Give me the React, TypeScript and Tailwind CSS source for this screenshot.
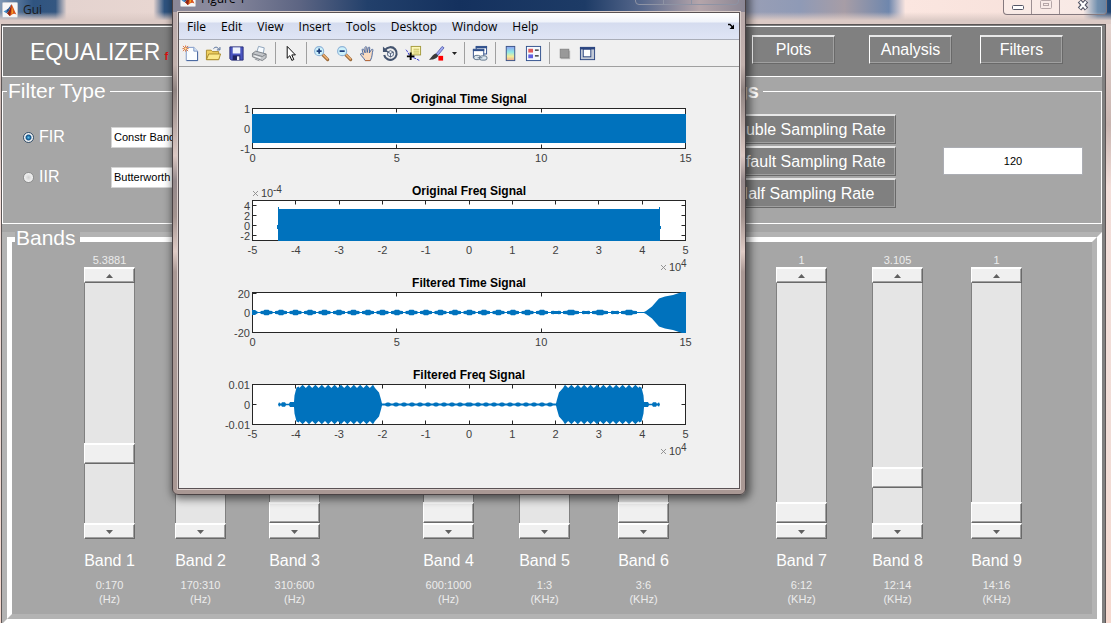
import { useState } from "react";
import type { ReactNode } from "react";

const BLUE = "#0072bd";

function MatlabLogo() {
  return (
    <svg width="16" height="16" viewBox="0 0 16 16" aria-hidden="true" className="shrink-0">
      <rect x="0.5" y="0.5" width="15" height="15" rx="1" fill="#f7f7f7" stroke="#c3c7cf" />
      <path d="M1.5 9.5 L5 7.5 L7 9 L4.5 11.2 Z" fill="#4a90c8" />
      <path d="M5 7.5 C7 6.5 8 3.5 9.5 2.2 L7 9 L4.5 11.2 Z" fill="#24508a" />
      <path d="M9.5 2.2 C8.5 5 8 8 5 11.5 C6.5 11.8 7 13.5 8 14 C10 13 11 10.5 14.5 12.5 C12.5 9 11 4 9.5 2.2 Z" fill="#d9541e" />
      <path d="M9.5 2.2 C9.3 6 9 10 8 14 C6.8 13.4 6.5 11.8 5 11.5 C8 8.5 8.5 5 9.5 2.2 Z" fill="#8e2412" />
      <path d="M10 5 C10.6 7 11 9.5 11 11 L9.5 12.2 Z" fill="#f5a623" />
    </svg>
  );
}

/* ---------- Equalizer window ---------- */

function BevelButton({ children, className }: { children: ReactNode; className: string }) {
  return (
    <button
      type="button"
      className={`border border-t-2 border-l-white border-t-[#e8e8e8] border-r-[#696969] border-b-[#696969] bg-[#808080] text-center text-base leading-5 text-white shadow-[inset_-1px_-1px_0_#a0a0a0] ${className}`}
    >
      {children}
    </button>
  );
}

type Band = { name: string; value: string; range: string; unit: string; pos: number };

const BAND_GROUPS: { cols: string; bands: Band[] }[] = [
  {
    cols: "grid-cols-[91px_94px_51px]",
    bands: [
      { name: "Band 1", value: "5.3881", range: "0:170", unit: "(Hz)", pos: 27 },
      { name: "Band 2", value: "", range: "170:310", unit: "(Hz)", pos: 50 },
      { name: "Band 3", value: "", range: "310:600", unit: "(Hz)", pos: 0 },
    ],
  },
  {
    cols: "grid-cols-[96px_99px_55px]",
    bands: [
      { name: "Band 4", value: "", range: "600:1000", unit: "(Hz)", pos: 0 },
      { name: "Band 5", value: "", range: "1:3", unit: "(KHz)", pos: 50 },
      { name: "Band 6", value: "", range: "3:6", unit: "(KHz)", pos: 0 },
    ],
  },
  {
    cols: "grid-cols-[96px_99px_51px]",
    bands: [
      { name: "Band 7", value: "1", range: "6:12", unit: "(KHz)", pos: 0 },
      { name: "Band 8", value: "3.105", range: "12:14", unit: "(KHz)", pos: 16 },
      { name: "Band 9", value: "1", range: "14:16", unit: "(KHz)", pos: 0 },
    ],
  },
];

function StepButton({ label, down, onClick }: { label: string; down?: boolean; onClick: () => void }) {
  return (
    <button
      type="button"
      aria-label={label}
      onClick={onClick}
      className="flex h-4 w-full items-center justify-center border border-t-2 border-l-white border-t-white border-r-[#696969] border-b-[#696969] bg-[#f0f0f0] shadow-[inset_-1px_-1px_0_#a0a0a0]"
    >
      <svg width="7" height="4" viewBox="0 0 7 4" aria-hidden="true">
        <path d={down ? "M0 0H7L3.5 4Z" : "M0 4H7L3.5 0Z"} fill="#606060" />
      </svg>
    </button>
  );
}

function BandSlider({ band }: { band: Band }) {
  const [pos, setPos] = useState(band.pos);
  const id = band.name.toLowerCase().replace(" ", "-");
  return (
    <div className="flex w-[51px] flex-col items-center text-[11px] whitespace-nowrap text-[#ececec]">
      <output htmlFor={id} className="h-[13px] leading-[13px]">{band.value}</output>
      <div className="flex w-full flex-col">
        <StepButton label={`Raise ${band.name}`} onClick={() => setPos(Math.min(100, pos + 1))} />
        <input
          id={id}
          type="range"
          min={0}
          max={100}
          value={pos}
          onChange={(e) => setPos(Number(e.target.value))}
          className="m-0 block h-60 w-full appearance-none bg-[#e5e5e5] shadow-[inset_1px_0_0_#808080,inset_-1px_0_0_#808080] [direction:rtl] [writing-mode:vertical-lr] [&::-webkit-slider-thumb]:box-border [&::-webkit-slider-thumb]:h-[21px] [&::-webkit-slider-thumb]:w-[51px] [&::-webkit-slider-thumb]:appearance-none [&::-webkit-slider-thumb]:border [&::-webkit-slider-thumb]:border-t-2 [&::-webkit-slider-thumb]:border-t-white [&::-webkit-slider-thumb]:border-r-[#696969] [&::-webkit-slider-thumb]:border-b-[#696969] [&::-webkit-slider-thumb]:border-l-white [&::-webkit-slider-thumb]:bg-[#f0f0f0] [&::-webkit-slider-thumb]:shadow-[inset_-1px_-1px_0_#a0a0a0]"
        />
        <StepButton down label={`Lower ${band.name}`} onClick={() => setPos(Math.max(0, pos - 1))} />
      </div>
      <label htmlFor={id} className="mt-3 text-base leading-5 text-white">{band.name}</label>
      <div className="mt-[7px] text-center leading-[14px]">
        <div>{band.range}</div>
        <div>{band.unit}</div>
      </div>
    </div>
  );
}

function FilterRow({ id, name, option, checked, onPick }: { id: string; name: string; option: string; checked: boolean; onPick: () => void }) {
  return (
    <div className="flex h-10 items-center pl-5">
      <div className="flex w-[88px] items-center gap-[5px]">
        <input
          id={id}
          type="radio"
          name="filter"
          checked={checked}
          onChange={onPick}
          className="size-[11px] appearance-none rounded-full border border-[#8e8f8f] bg-[radial-gradient(circle_at_center,#d2d2d2_0,#f4f4f4_70%)] checked:border-[#35506b] checked:bg-[radial-gradient(circle_at_center,#5cc3f0_0,#0e4f86_38%,#f4f4f4_55%)]"
        />
        <label htmlFor={id} className="text-base leading-5 text-white">{name}</label>
      </div>
      <select aria-label={`${name} method`} className="h-[21px] w-40 appearance-none border border-[#d4d4d4] bg-white px-[2px] text-[11px] leading-4 text-black">
        <option>{option}</option>
      </select>
    </div>
  );
}

function EqualizerWindow() {
  const [filter, setFilter] = useState("fir");
  return (
    <main className="flex min-h-screen flex-col bg-[linear-gradient(#eadad5,#c9b5b0_20%,#f3ded9_30%,#f0dcd6_70%,#f6d9cf)] pr-[5px] pl-px">
      <header className="-mr-[5px] -ml-px flex h-6 items-start justify-between bg-[linear-gradient(to_bottom,transparent_50%,#dccac5_85%),linear-gradient(to_right,#7f97b4_0,#2f5480_3%,#345781_5%,#e4d3cf_6%,#e8d6d1_13.8%,#2f5480_14.8%,#2f5480_66%,#9a9fb5_67%,#8f9ab6_72%,#a79da6_76%,#6f87ad_80%,#fbe6e0_81.5%,#f6e0da_97.5%,#34608c_98.8%,#1c4170_100%)]">
        <div className="flex items-center gap-[5px] pt-[2px] pl-[2px]">
          <MatlabLogo />
          <h1 className="font-['Open_Sans',sans-serif] text-xs leading-4 text-[#1b1b1b]">Gui</h1>
        </div>
        <div className="mr-[4px] flex h-[15px] divide-x divide-[#9c8f92] overflow-hidden rounded-b border border-t-0 border-[#85797e] bg-white/30">
          <button type="button" aria-label="Minimize" className="flex w-7 justify-center pt-[5px]">
            <svg width="12" height="5" viewBox="0 0 12 5" aria-hidden="true"><rect x="0.5" y="0.5" width="11" height="4" rx="1" fill="#fff" stroke="#535666" /></svg>
          </button>
          <button type="button" aria-label="Maximize" disabled className="flex w-7 justify-center">
            <svg width="12" height="10" viewBox="0 0 12 10" aria-hidden="true" fill="none" stroke="#b5a7a8"><rect x="0.5" y="0.5" width="11" height="8" rx="1" fill="#f8ebe8" /><rect x="3.5" y="3.5" width="5" height="2" /></svg>
          </button>
          <button type="button" aria-label="Close" className="flex w-[46px] justify-center">
            <svg width="12" height="11" viewBox="0 0 12 11" aria-hidden="true"><path d="M2.5 1 L9.5 9 M9.5 1 L2.5 9" stroke="#535666" strokeWidth="4.6" /><path d="M3 1.5 L9 8.5 M9 1.5 L3 8.5" stroke="#fff" strokeWidth="2.2" /></svg>
          </button>
        </div>
      </header>

      <div className="flex flex-1 flex-col border-t border-r border-l border-[#5c5656] bg-[#808080] pr-[3px] pt-px">
        <section className="flex h-[51px] shrink-0 items-start justify-between border border-white bg-[#808080] pr-[38px] pl-[27px]">
          <div className="flex items-baseline gap-1 pt-[9px]">
            <h2 className="text-[23px] leading-8 text-white">EQUALIZER</h2>
            <span className="text-[11px] font-bold text-[#e01010]">f</span>
          </div>
          <nav className="grid grid-cols-[117px_111px_83px] pt-2">
            <BevelButton className="h-[29px] w-[83px]">Plots</BevelButton>
            <BevelButton className="h-[29px] w-[83px]">Analysis</BevelButton>
            <BevelButton className="h-[29px] w-[83px]">Filters</BevelButton>
          </nav>
        </section>

        <div className="flex flex-1 flex-col bg-[#a6a6a6]">
          <div className="flex pt-[2px]">
            <fieldset className="min-w-0 flex-1 border border-white pt-[14px] pb-[26px]">
              <legend className="ml-[4px] pr-1 pl-px text-[21px] leading-6 text-white">Filter Type</legend>
              <FilterRow id="fir" name="FIR" option="Constr Band" checked={filter === "fir"} onPick={() => setFilter("fir")} />
              <FilterRow id="iir" name="IIR" option="Butterworth" checked={filter === "iir"} onPick={() => setFilter("iir")} />
            </fieldset>
            <fieldset className="w-[480px] border border-white pt-[11px]">
              <legend className="mr-[338px] ml-auto pr-1 pl-1 text-xl leading-6 font-bold text-white">Settings</legend>
              <div className="flex items-center justify-end gap-[47px] pr-[18px]">
                <div className="flex w-[181px] flex-col gap-[2px]">
                  <BevelButton className="h-[30px]">Double Sampling Rate</BevelButton>
                  <BevelButton className="h-[30px]">Default Sampling Rate</BevelButton>
                  <BevelButton className="h-[30px]">Half Sampling Rate</BevelButton>
                </div>
                <input aria-label="Sampling value" type="text" defaultValue="120" className="h-[28px] w-[140px] border border-[#abadb3] bg-white text-center text-[11px] text-black" />
              </div>
            </fieldset>
          </div>

          <section className="mt-2 flex flex-1 flex-col border-[5px] border-t-[#b3b3b3] border-r-white border-b-white border-l-[#b3b3b3]">
            <div className="flex-1 border-[5px] border-t-white border-r-[#b3b3b3] border-b-[#b3b3b3] border-l-white pb-2">
              <h2 className="-mt-4 ml-[3px] w-fit bg-[#a6a6a6] pr-1 pl-px text-[21px] leading-6 text-white">Bands</h2>
              <div className="mt-1 flex justify-between pr-[70px] pl-[72px]">
                {BAND_GROUPS.map((g) => (
                  <div key={g.bands[0].name} className={`grid ${g.cols}`}>
                    {g.bands.map((b) => (
                      <BandSlider key={b.name} band={b} />
                    ))}
                  </div>
                ))}
              </div>
            </div>
          </section>
        </div>
      </div>
    </main>
  );
}

/* ---------- Figure window ---------- */

function Tool({ label, children }: { label: string; children: ReactNode }) {
  return (
    <button type="button" aria-label={label} className="flex w-[23px] items-center justify-center">
      <svg width="17" height="17" viewBox="0 0 18 18" aria-hidden="true" fill="none">{children}</svg>
    </button>
  );
}

function Sep() {
  return (
    <div className="flex w-2 justify-center">
      <div className="h-[22px] w-px bg-[#a0a0a0]" />
    </div>
  );
}

function Magnifier({ plus }: { plus?: boolean }) {
  return (
    <>
      <path d="M10.5 10.5 L15.5 15.5" stroke="#9a6a3a" strokeWidth="3.4" strokeLinecap="round" />
      <path d="M11 10.5 L15.2 14.7" stroke="#f0b070" strokeWidth="1.6" strokeLinecap="round" />
      <circle cx="6.5" cy="6.5" r="4.8" fill="#cdf1fb" stroke="#8fb4d8" strokeWidth="1.2" />
      <path d="M3.8 6.5 H9.2" stroke="#1d3f7d" strokeWidth="1.8" />
      {plus && <path d="M6.5 3.8 V9.2" stroke="#1d3f7d" strokeWidth="1.8" />}
    </>
  );
}

function Toolbar() {
  return (
    <div className="flex h-[27px] items-center border-b border-[#a0a0a0] bg-[#f0f0f0]">
      <Tool label="New Figure">
        <path d="M4.5 2.5 H12.5 L16.5 6.5 V16.5 H4.5 Z" fill="#fafdff" stroke="#7a95c4" />
        <path d="M12.5 2.5 V6.5 H16.5" fill="#d6e4f5" stroke="#7a95c4" />
        <path d="M16.5 7 V16.5 H5" stroke="#42639c" />
        <path d="M1 1 L6.5 6.5 M6.5 1 L1 6.5 M3.8 0.5 V7 M0.5 3.8 H7" stroke="#d9703a" />
        <circle cx="3.8" cy="3.8" r="1.2" fill="#ffe9a0" />
      </Tool>
      <Tool label="Open File">
        <path d="M1.5 15.5 V5.5 H6.5 L8 7 H14.5 V15.5 Z" fill="#f0d060" stroke="#a8892a" />
        <path d="M1.5 15.5 L4 9.5 H16.5 L14.5 15.5 Z" fill="#fbe98c" stroke="#a8892a" />
        <path d="M9 3.8 C11 1.6 13.5 2 14.5 4.5 M15.8 2.2 V5.2 H12.6" stroke="#44618f" />
      </Tool>
      <Tool label="Save Figure">
        <path d="M2 2 H16 V16 H3.5 L2 14.5 Z" fill="#4a55c0" stroke="#262c78" />
        <rect x="5" y="2.5" width="8" height="6.5" fill="#eef3fc" />
        <rect x="5" y="11" width="8" height="5" fill="#1f2460" />
        <rect x="9.5" y="12" width="2.5" height="4" fill="#f0f0f8" />
      </Tool>
      <Tool label="Print Figure">
        <path d="M6 8 L8 1.5 L14 3 L13 9 Z" fill="#f7fbff" stroke="#8ba0b8" />
        <path d="M1.5 9 L5 6.5 L16 9.5 V13.5 L12 16.5 L1.5 12.5 Z" fill="#c3c6ca" stroke="#7b7f85" />
        <path d="M1.5 9.2 L12 12.2 L16 9.6" stroke="#7b7f85" />
        <path d="M3.5 11.5 L10.5 13.8" stroke="#fff" />
        <path d="M4 14.8 L9 16.8" stroke="#8a8f96" />
      </Tool>
      <Sep />
      <Tool label="Edit Plot">
        <path d="M5.5 1.5 V14 L8.3 11.3 L10.4 16.3 L12.5 15.4 L10.4 10.5 H14.2 Z" fill="#fff" stroke="#000" />
      </Tool>
      <Sep />
      <Tool label="Zoom In"><Magnifier plus /></Tool>
      <Tool label="Zoom Out"><Magnifier /></Tool>
      <Tool label="Pan">
        <path d="M6.5 16.5 C5 13.5 2.5 12 1.5 9.5 C2.2 8.3 3.5 9 4.8 10.5 L3.3 5 C3.6 3.8 4.9 4 5.2 5 L6.5 8.3 L6.3 2.6 C6.7 1.4 8 1.5 8.2 2.6 L8.7 8 L9.8 2.8 C10.3 1.8 11.5 2.1 11.4 3.2 L10.9 8.4 L13.3 4.8 C14.2 4.1 15.1 4.8 14.7 5.8 C13.5 9 14.5 12 12 16.5 Z" fill="#fbdcc0" stroke="#42639c" />
        <path d="M6.5 16.5 H12" stroke="#c46a30" />
      </Tool>
      <Tool label="Rotate 3D">
        <path d="M3.3 5.2 A6.7 6.7 0 1 1 2.3 10.5" stroke="#44546f" strokeWidth="2.2" />
        <path d="M1 1.5 V7.5 H7 Z" fill="#44546f" />
        <path d="M6 7.5 L9 6 L12 7.5 V11 L9 12.7 L6 11 Z M6 7.5 L9 9 L12 7.5 M9 9 V12.7" fill="#eef5ff" stroke="#44546f" strokeWidth="0.9" />
      </Tool>
      <Tool label="Data Cursor">
        <rect x="6.5" y="1.5" width="10" height="9" fill="#fdf7b8" stroke="#a39a3c" />
        <path d="M9 4.5 H15 M9 6.5 H15 M9 8.5 H15" stroke="#c2b95c" />
        <path d="M1 5 C3 7 3.5 9.5 5.5 12 C8 13.5 11 13.5 16 17" stroke="#2b2bd0" strokeDasharray="3 1" />
        <path d="M6 8 V16 M2 12 H10" stroke="#000" strokeWidth="2" />
      </Tool>
      <Tool label="Brush Data">
        <path d="M8.5 9.5 L15 1.5 L17 3 L10.5 11 Z" fill="#9fa9ee" stroke="#4a55a8" strokeWidth="0.8" />
        <path d="M8.2 9 L10.8 11.2 C10 14.5 5 16 1 15.5 C3.5 14 4.5 10 8.2 9 Z" fill="#3a3a3a" />
        <rect x="11" y="11.5" width="5" height="5" fill="#ff0000" />
      </Tool>
      <button type="button" aria-label="Brush options" className="flex w-3 items-center justify-center">
        <svg width="5" height="3" viewBox="0 0 5 3" aria-hidden="true"><path d="M0 0H5L2.5 3Z" fill="#222" /></svg>
      </button>
      <Sep />
      <Tool label="Link Plot">
        <rect x="5.5" y="1.5" width="11" height="8" fill="#fff" stroke="#30508c" />
        <path d="M5 2.5 H17" stroke="#30508c" strokeWidth="2" />
        <rect x="2.5" y="4.5" width="11" height="9" fill="#fff" stroke="#30508c" />
        <path d="M2 5.5 H14" stroke="#30508c" strokeWidth="2" />
        <rect x="3" y="11" width="7" height="4.5" rx="2.2" fill="#dbe6ee" stroke="#5c7288" />
        <rect x="9" y="11.5" width="8" height="4.5" rx="2.2" fill="#dbe6ee" stroke="#5c7288" />
        <path d="M7 13.5 H12" stroke="#5c7288" />
      </Tool>
      <Sep />
      <Tool label="Insert Colorbar">
        <defs>
          <linearGradient id="cbar" x1="0" y1="0" x2="0" y2="1">
            <stop offset="0" stopColor="#8fa0f0" />
            <stop offset="0.4" stopColor="#8ee8e8" />
            <stop offset="0.7" stopColor="#f2ee9a" />
            <stop offset="1" stopColor="#f0a890" />
          </linearGradient>
        </defs>
        <rect x="4.5" y="1.5" width="9" height="15" fill="url(#cbar)" stroke="#3a5488" />
      </Tool>
      <Tool label="Insert Legend">
        <rect x="1.5" y="1.5" width="15" height="15" fill="#f6fafe" stroke="#30508c" />
        <rect x="3.5" y="4" width="5" height="4" fill="#e05a5a" />
        <rect x="3.5" y="10" width="5" height="4" fill="#6060e0" />
        <path d="M10.5 5.5 H14.5 M10.5 11.5 H14.5" stroke="#222" strokeWidth="1.4" />
      </Tool>
      <Sep />
      <Tool label="Hide Plot Tools">
        <rect x="5" y="6" width="10" height="9" fill="#b8b8b8" />
        <rect x="4.5" y="4.5" width="9" height="9" fill="#999" stroke="#858585" />
      </Tool>
      <Tool label="Show Plot Tools">
        <rect x="1.5" y="2.5" width="15" height="13" fill="#c3cad6" stroke="#2b4580" />
        <path d="M1 3.5 H17" stroke="#2b4580" strokeWidth="2.4" />
        <rect x="4.5" y="4.5" width="8" height="8" fill="#fff" stroke="#2b4580" />
      </Tool>
    </div>
  );
}

const LEFT = 73.5;
const RIGHT = 506.5;
const TOP = 19.5;
const BOTTOM = 59.5;
const MID = 39.5;

function xTicks(labels: string[]) {
  return labels.map((label, i) => ({ label, x: LEFT + ((RIGHT - LEFT) * i) / (labels.length - 1) }));
}

const TIME_TICKS = xTicks(["0", "5", "10", "15"]);
const FREQ_TICKS = xTicks(["-5", "-4", "-3", "-2", "-1", "0", "1", "2", "3", "4", "5"]);

type YTick = { label: string; y: number };

function envelope(points: [number, number][]) {
  const upper = points.map(([x, h]) => `${x.toFixed(1)} ${(MID - h).toFixed(1)}`);
  const lower = [...points].reverse().map(([x, h]) => `${x.toFixed(1)} ${(MID + h).toFixed(1)}`);
  return `M${[...upper, ...lower].join("L")}Z`;
}

function filteredTime() {
  const pts: [number, number][] = [];
  const bump = (c: number, half: number, h: number) => {
    pts.push([c - half, 0.6], [c - half + 0.1, 1.4], [c - half / 2, 1.8], [c - half / 3, h], [c + half / 3, h], [c + half / 2, 1.8], [c + half - 0.1, 1.4], [c + half, 0.6]);
  };
  pts.push([73, 2.6], [76, 2.4], [79, 0.6]);
  for (let k = 1; k <= 20; k++) bump(73 + k * 14.5, 6, 2.7);
  bump(377, 5, 1.5);
  bump(392, 8, 2.8);
  bump(407, 4, 1.5);
  bump(421, 8, 2.8);
  bump(436, 4, 1.5);
  bump(450, 8, 2.8);
  pts.push([465, 0.6], [467, 1.5], [473, 6], [480, 14], [486, 16], [494, 17.5], [503, 20.5], [507, 20.5]);
  return envelope(pts);
}

function filteredFreq() {
  const center = 290;
  const half: [number, number][] = [];
  for (let d = 0; d < 86; d += 2) half.push([d, d % 8 < 4 ? 2 : 1.1]);
  half.push([87, 1], [88, 5], [90, 12], [94, 16.5]);
  for (let d = 96; d < 168; d += 6.4) half.push([d, 19.8], [d + 3.2, 16.6]);
  half.push([170, 18], [172.5, 17], [174.5, 9], [175, 2.4], [179, 2.4], [180, 0.8], [183, 0.8], [184, 2.2], [187, 2.2], [188, 0.8], [190, 2.2], [191, 0]);
  const pts: [number, number][] = [
    ...[...half].reverse().map(([d, h]): [number, number] => [center - d, h]),
    ...half.map(([d, h]): [number, number] => [center + d, h]),
  ];
  return envelope(pts);
}

function Exponent({ x, y, power }: { x: number; y: number; power: string }) {
  return (
    <g fontSize="11" fill="#404040">
      <path d={`M${x} ${y - 6} l5 5 m0 -5 l-5 5`} stroke="#8a8a8a" strokeWidth="0.9" />
      <text x={x + 8} y={y}>10</text>
      <text x={x + 20} y={y - 4} fontSize="10">{power}</text>
    </g>
  );
}

type PlotProps = {
  title: string;
  path: string;
  ticks: { label: string; x: number }[];
  yTicks: YTick[];
  topPower?: string;
  bottomPower?: string;
};

function Plot({ title, path, ticks, yTicks, topPower, bottomPower }: PlotProps) {
  return (
    <svg width="560" height="92" viewBox="0 0 560 92" role="img" aria-label={title} className="block font-['Liberation_Sans',Arial,sans-serif]">
      <text x="290" y="14" textAnchor="middle" fontSize="12" fontWeight="bold" fill="#000">{title}</text>
      <rect x={LEFT} y={TOP} width={RIGHT - LEFT} height={BOTTOM - TOP} fill="#fff" stroke="#262626" />
      <g stroke="#262626">
        {ticks.map((t) => (
          <path key={t.label} d={`M${Math.floor(t.x) + 0.5} ${TOP} v4 M${Math.floor(t.x) + 0.5} ${BOTTOM} v-4`} />
        ))}
        {yTicks.map((t) => (
          <path key={t.label} d={`M${LEFT} ${t.y} h4 M${RIGHT} ${t.y} h-4`} />
        ))}
      </g>
      <path d={path} fill={BLUE} />
      <g fontSize="11" fill="#404040">
        {ticks.map((t) => (
          <text key={t.label} x={t.x} y="73" textAnchor="middle">{t.label}</text>
        ))}
        {yTicks.map((t) => (
          <text key={t.label} x="71" y={t.y + 4} textAnchor="end">{t.label}</text>
        ))}
      </g>
      {topPower && <Exponent x={74} y={16} power={topPower} />}
      {bottomPower && <Exponent x={482} y={90} power={bottomPower} />}
    </svg>
  );
}

const MENUS = ["File", "Edit", "View", "Insert", "Tools", "Desktop", "Window", "Help"];

function FigureWindow() {
  return (
    <section
      aria-label="Figure 1"
      className="absolute -top-3 left-[172px] rounded-md border border-[#4a4244] bg-[linear-gradient(to_bottom,#b5a6a8_0,#c2b1ad_15%,#8f8381_20%,#dcc8c3_33%,#94888a_38%,#a3938f_45%,#e0ccc6_52%,#a99894_56%,#a99894_100%)] p-[5px] pt-0 shadow-[2px_2px_8px_2px_rgba(0,0,0,0.55)]"
    >
      <header className="-mx-[5px] flex h-[23px] items-start justify-between rounded-t-md bg-[linear-gradient(to_right,#8a8796_0,#8a8a9e_8%,#5d6583_22%,#22406b_34%,#14315e_50%,#1d3b66_72%,#57688c_82%,#b5a5aa_92%,#8a8694_100%)] pr-[6px] pl-[7px]">
        <div className="flex items-center gap-[5px] pt-[2px]">
          <MatlabLogo />
          <h2 className="font-['Open_Sans',sans-serif] text-xs leading-4 text-black">Figure 1</h2>
        </div>
        <div className="flex h-4 divide-x divide-[#8e93a4] rounded-b border border-[#8e93a4]">
          <button type="button" aria-label="Minimize figure" className="w-7" />
          <button type="button" aria-label="Maximize figure" className="w-7" />
          <button type="button" aria-label="Close figure" className="w-[46px]" />
        </div>
      </header>
      <div className="border border-[#5a5254] bg-[#f0f0f0] outline outline-[#d9cdca]">
        <nav className="flex h-[27px] items-center justify-between border-b border-[#a9adb8] bg-[linear-gradient(#ffffff_0,#f0f3fa_35%,#d5dcef_38%,#dfe5f5_100%)] pt-px pr-1 pl-2">
          <div className="flex gap-[15px]">
            {MENUS.map((m) => (
              <button key={m} type="button" className="font-['Open_Sans',sans-serif] text-xs leading-4 text-black">{m}</button>
            ))}
          </div>
          <button type="button" aria-label="Dock Figure">
            <svg width="8" height="7" viewBox="0 0 8 7" aria-hidden="true"><path d="M1 1.5 H3 L5.5 4" fill="none" stroke="#000" strokeWidth="1.4" /><path d="M7 1.5 V6 H2.5 Z" fill="#000" /></svg>
          </button>
        </nav>
        <Toolbar />
        <div className="pt-[22px] pb-[31px]">
          <Plot
            title="Original Time Signal"
            ticks={TIME_TICKS}
            yTicks={[{ label: "1", y: 19.5 }, { label: "0", y: 39.5 }, { label: "-1", y: 59.5 }]}
            path="M73 25H507V54H73Z"
          />
          <Plot
            title="Original Freq Signal"
            ticks={FREQ_TICKS}
            yTicks={[{ label: "4", y: 24.5 }, { label: "2", y: 34.5 }, { label: "0", y: 44.5 }, { label: "-2", y: 54.5 }]}
            path="M98 44H99V26H100V28H480V26H481V45H482V48H481V60H99V48H98Z"
            topPower="-4"
            bottomPower="4"
          />
          <Plot
            title="Filtered Time Signal"
            ticks={TIME_TICKS}
            yTicks={[{ label: "20", y: 20.5 }, { label: "0", y: 39.5 }, { label: "-20", y: 59.5 }]}
            path={filteredTime()}
          />
          <Plot
            title="Filtered Freq Signal"
            ticks={FREQ_TICKS}
            yTicks={[{ label: "0.01", y: 19.5 }, { label: "0", y: 39.5 }, { label: "-0.01", y: 59.5 }]}
            path={filteredFreq()}
            bottomPower="4"
          />
        </div>
      </div>
    </section>
  );
}

export default function App() {
  return (
    <div className="relative overflow-hidden font-['Liberation_Sans',Arial,sans-serif]">
      <EqualizerWindow />
      <FigureWindow />
    </div>
  );
}
